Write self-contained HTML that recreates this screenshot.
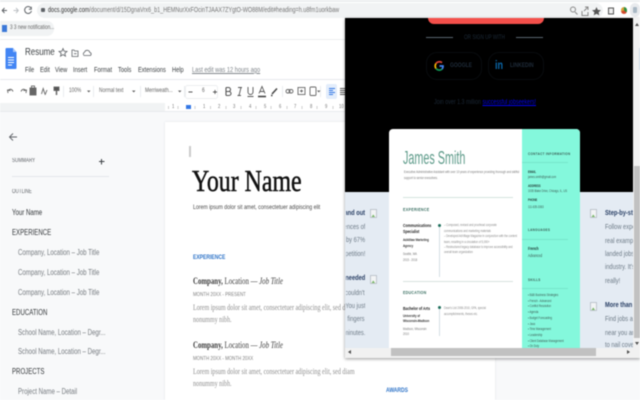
<!DOCTYPE html>
<html><head><meta charset="utf-8"><style>
*{box-sizing:border-box;margin:0;padding:0}
html,body{width:640px;height:400px;overflow:hidden;background:#fff}
body{position:relative;font-family:"Liberation Sans",sans-serif}
#w{position:absolute;left:0;top:0;width:640px;height:400px;overflow:hidden;filter:blur(.4px)}
.a,.t{position:absolute}
.t{white-space:nowrap;line-height:1;transform:scaleX(.76);transform-origin:0 0}
.r{transform-origin:100% 0;right:0}
.s{font-family:"Liberation Serif",serif}
.g{color:#6f7c88;font-size:7.500px}
.b{color:#2b4166;font-size:7.500px;font-weight:bold}
.m{top:66px;font-size:7.500px;color:#3c4043}
.n{top:105px;font-size:5.500px;color:#777}
.o{font-size:8px;color:#33373a;left:12px}
.p{font-size:8px;color:#777c81;left:18px}
.c{left:139px;font-size:3.400px;color:#3c5a52}
.k{left:139px;font-size:3.400px;font-weight:bold;color:#24403a}
.h{left:139px;font-size:4px;font-weight:bold;color:#3a5f55;letter-spacing:.4px}
.x{left:15px;font-size:3.500px;color:#777}
.y{left:55px;font-size:3.400px;color:#888}
.v{left:133px;width:46px;height:1px;background:#76e6cb}
.d{font-size:8px;color:#8e8e8e}
</style></head><body><div id="w">
<!-- browser chrome -->
<div class="a" style="left:0;top:0;width:640px;height:2px;background:#eceef0"></div>
<div class="a" style="left:37px;top:3px;width:566px;height:15px;border-radius:8px;background:#f1f3f4"></div>
<svg class="a" style="left:0;top:0" width="40" height="20" fill="none" stroke="#5f6368" stroke-width="1"><path d="M7 10.500H2.500M4.500 8l-2.300 2.500 2.300 2.500"/><path stroke="#bcc0c4" d="M13.500 10.500H18M16 8l2.300 2.500L16 13"/><path d="M31 8a3.500 3.500 0 1 0 .5 3M31.300 6.800v2.400h-2.400"/></svg>
<div class="a" style="left:41px;top:8px;width:4px;height:4px;background:#5f6368;border-radius:1px"></div>
<div class="t" style="left:48px;top:6px;font-size:7.200px;color:#777"><span style="color:#333">docs.google.com</span>/document/d/15DgnaVrx6_b1_HEMNurXxFOcinTJAAX7ZYgtO-WO88M/edit#heading=h.u8fm1uorkbaw</div>
<svg class="a" style="left:568px;top:4px" width="72" height="14" fill="none" stroke="#888" stroke-width="1"><circle cx="5" cy="5.500" r="2.500"/><path d="M7 8l2.500 2.500M14 7v4.500h6V8M17 3h3v3M20 3l-4 4"/><path fill="#555" stroke="none" d="M28.500 3l1.300 2.900 3.200.3-2.400 2.100.7 3.100-2.800-1.600-2.800 1.600.7-3.100-2.400-2.100 3.200-.3z"/><rect x="40.500" y="4" width="5" height="6" fill="#eee" stroke="#555"/></svg>
<div class="a" style="left:620.500px;top:7px;width:6px;height:7px;border-radius:3px;background:conic-gradient(#2f8f3f 0 35%,#d24a2e 35% 70%,#d8a23a 70% 100%)"></div>
<div class="a" style="left:630px;top:3px;width:10px;height:14px;border-radius:5px;background:#e8eaed"></div>
<div class="a" style="left:633px;top:7px;width:4px;height:6px;border-radius:1px;background:#a9b8c4"></div>
<div class="a" style="left:0;top:21px;width:54px;height:15px;border-radius:0 7px 7px 0;background:#f1f3f4"></div>
<div class="a" style="left:2px;top:25px;width:5px;height:7px;background:#3b78d8"></div>
<div class="t" style="left:10px;top:25px;font-size:6.200px;color:#666">3 3 new notification...</div>
<div class="a" style="left:0;top:39px;width:346px;height:1px;background:#eceef0"></div>
<!-- docs header -->
<svg class="a" style="left:5px;top:47px" width="12" height="24"><path fill="#4285f4" d="M1.500 1h6.500l3.500 4v16a1 1 0 0 1-1 1H1.500a1 1 0 0 1-1-1V2a1 1 0 0 1 1-1z"/><path fill="#a6c5fa" d="M8 1l3.500 4H8z"/><path stroke="#fff" stroke-width="1" d="M3 10.500h6M3 13h6M3 15.500h6M3 18h4"/></svg>
<div class="t" style="left:25px;top:47px;font-size:10.500px;color:#3c4043">Resume</div>
<svg class="a" style="left:58px;top:47px" width="36" height="12" fill="none" stroke="#5f6368" stroke-width=".8"><path d="M5 1.500l1.100 2.700 2.900.2-2.200 1.900.7 2.800L5 7.600 2.500 9.100l.7-2.800L1 4.400l2.900-.2z"/><path d="M14 3h2l.7 1H20v5.500h-6zM16 6.700h2.500"/><path d="M26 8.500h5.500a1.500 1.500 0 0 0 .3-3 2.700 2.700 0 0 0-5.200-.4A2 2 0 0 0 26 8.500z"/></svg>
<div class="t m" style="left:25px">File</div>
<div class="t m" style="left:40px">Edit</div>
<div class="t m" style="left:55px">View</div>
<div class="t m" style="left:73px">Insert</div>
<div class="t m" style="left:94px">Format</div>
<div class="t m" style="left:118px">Tools</div>
<div class="t m" style="left:138px">Extensions</div>
<div class="t m" style="left:172px">Help</div>
<div class="t m" style="left:192px;color:#80868b;text-decoration:underline">Last edit was 12 hours ago</div>
<div class="a" style="left:0;top:79px;width:346px;height:1px;background:#e8eaed"></div>
<!-- toolbar -->
<svg class="a" style="left:0;top:80px" width="346" height="23" fill="none" stroke="#666" stroke-width=".9">
<path d="M8 13l-.5-3 3 .5M8 10.500c2-2 4-1.500 5 1M26 13l.5-3-3 .5M26 10.500c-2-2-4-1.500-5 1"/>
<rect x="30" y="8" width="6" height="7" fill="#666"/><rect x="31.500" y="6" width="3" height="2"/>
<path d="M41.500 14l1.700-5.500 1.700 5.500M47 10l-2 5"/>
<rect x="54" y="7" width="5" height="3.500" fill="#555"/><path d="M56.500 10.500V15" stroke-width="1.500"/>
<path stroke="#e8eaed" d="M63.500 6v11M93.500 6v11M140.500 6v11M184.500 6v11M282.500 6v11M320.500 6v11"/>
<path fill="#666" stroke="none" d="M87 10.500h3.500l-1.750 2zM132 10.500h3.500l-1.750 2zM178 10.500h3.500l-1.750 2zM317 10.500h3.500l-1.750 2z"/>
<rect x="185.500" y="5.500" width="32" height="13" rx="2" stroke="#eceef0"/>
<path stroke="#555" d="M188.500 12h4M215 10v4M213 12h4"/>
<path stroke="#555" stroke-width="1.100" d="M226 7.500v8M226 7.500h2.500a2 2 0 0 1 0 4H226M226 11.500h3a2 2 0 0 1 0 4h-3"/>
<path stroke="#555" d="M238 7.500h4M241 7.500l-2 8M237.500 15.500h3.500"/>
<path stroke="#555" d="M248 7v5a2.500 2.500 0 0 0 5 0V7M247.500 16.500h6"/>
<path stroke="#555" d="M259 13.500l3-7 3 7M260 11.500h4"/><path stroke="#444" stroke-width="1.600" d="M258 16.500h8"/>
<path stroke="#444" stroke-width="1.500" d="M272 14l5-5.500M271 15.500h1.500"/>
<rect x="286" y="9.500" width="4" height="3.500" rx="1.700"/><rect x="289" y="9.500" width="4" height="3.500" rx="1.700"/>
<rect x="298" y="7.500" width="7" height="7"/><path d="M300 11h3M301.500 9.500v3"/>
<rect x="310" y="7" width="6" height="8.500" rx="1"/>
</svg>
<div class="a" style="left:326px;top:84px;width:11px;height:15px;border-radius:2px;background:#e3edfb"></div>
<svg class="a" style="left:328px;top:87px" width="18" height="10" stroke-width="1"><path stroke="#3578e5" d="M1 1.500h6M1 3.500h4M1 5.500h6M1 7.500h4"/><path stroke="#555" d="M12 1.500h6M12 3.500h6M12 5.500h6M12 7.500h6"/></svg>
<div class="t" style="left:69px;top:88px;font-size:6.300px;color:#666">100%</div>
<div class="t" style="left:99px;top:88px;font-size:6.300px;color:#666">Normal text</div>
<div class="t" style="left:145px;top:88px;font-size:6.300px;color:#666">Merriweath...</div>
<div class="t" style="left:202px;top:88px;font-size:6.300px;color:#666">6</div>
<!-- ruler -->
<div class="a" style="left:0;top:103px;width:346px;height:8px;background:#f1f3f4"></div>
<div class="a" style="left:165px;top:103px;width:181px;height:8px;background:#fff"></div>
<div class="t n" style="left:172px">1</div><div class="t n" style="left:203px">1</div><div class="t n" style="left:218px">2</div><div class="t n" style="left:233px">3</div><div class="t n" style="left:249px">4</div><div class="t n" style="left:264px">5</div><div class="t n" style="left:279px">6</div><div class="t n" style="left:294px">7</div><div class="t n" style="left:310px">8</div><div class="t n" style="left:325px">9</div><div class="t n" style="left:339px">10</div>
<svg class="a" style="left:165px;top:105px" width="181" height="5" stroke="#bbb" stroke-width=".7"><path d="M3.500 1v3M13 1v3M30 1v3M45.500 1v3M61 1v3M76 1v3M91 1v3M106 1v3M122 1v3M137 1v3M152 1v3M168 1v3"/></svg>
<div class="a" style="left:186px;top:105px;width:5px;height:4px;background:#3578e5"></div>
<!-- sidebar -->
<div class="a" style="left:0;top:111px;width:640px;height:289px;background:#f8f9fa"></div>
<div class="a" style="left:0;top:111px;width:640px;height:1px;background:#e8eaed"></div>
<svg class="a" style="left:8px;top:132px" width="10" height="10" fill="none" stroke="#5f6368" stroke-width=".9"><path d="M9 5H1.500M5 1.500L1.500 5 5 8.500"/></svg>
<div class="t" style="left:12px;top:158px;font-size:6px;color:#5f6368">SUMMARY</div>
<svg class="a" style="left:98px;top:158px" width="7" height="7" stroke="#3c4043" stroke-width="1"><path d="M3.500 1v5.500M1 3.500h5.500"/></svg>
<div class="a" style="left:12px;top:176px;width:97px;height:1px;background:#e3e6ea"></div>
<div class="t" style="left:12px;top:189px;font-size:6px;color:#5f6368">OUTLINE</div>
<div class="t o" style="top:209px">Your Name</div>
<div class="t o" style="top:229px">EXPERIENCE</div>
<div class="t p" style="top:249px">Company, Location – Job Title</div>
<div class="t p" style="top:269px">Company, Location – Job Title</div>
<div class="t p" style="top:289px">Company, Location – Job Title</div>
<div class="t o" style="top:309px">EDUCATION</div>
<div class="t p" style="top:329px">School Name, Location – Degr...</div>
<div class="t p" style="top:348px">School Name, Location – Degr...</div>
<div class="t o" style="top:368px">PROJECTS</div>
<div class="t p" style="top:388px">Project Name – Detail</div>
<!-- doc page -->
<div class="a" style="left:165px;top:122px;width:330px;height:278px;background:#fff;box-shadow:0 0 2px #dfe1e5"></div>
<div class="a" style="left:189px;top:146px;width:2px;height:11px;background:#ccc"></div>
<div class="t s" style="left:192px;top:165px;font-size:31px;color:#111;-webkit-text-stroke:.5px #111;transform:scaleX(.77)">Your Name</div>
<div class="t" style="left:192.500px;top:205px;font-size:6.800px;color:#4a4a4a">Lorem ipsum dolor sit amet, consectetuer adipiscing elit</div>
<div class="t" style="left:193px;top:255px;font-size:6.600px;font-weight:bold;color:#2f74c8">EXPERIENCE</div>
<div class="t s" style="left:193px;top:277px;font-size:9px;color:#3c3c3c"><b>Company,</b> Location — <i>Job Title</i></div>
<div class="t" style="left:193px;top:292.500px;font-size:5.800px;color:#808080">MONTH 20XX - PRESENT</div>
<div class="t s d" style="left:193px;top:304px">Lorem ipsum dolor sit amet, consectetuer adipiscing elit, sed diam</div>
<div class="t s d" style="left:193px;top:316px">nonummy nibh.</div>
<div class="t s" style="left:193px;top:341px;font-size:9px;color:#3c3c3c"><b>Company,</b> Location — <i>Job Title</i></div>
<div class="t" style="left:193px;top:356.500px;font-size:5.800px;color:#808080">MONTH 20XX - MONTH 20XX</div>
<div class="t s d" style="left:193px;top:368px">Lorem ipsum dolor sit amet, consectetuer adipiscing elit, sed diam</div>
<div class="t s d" style="left:193px;top:380px">nonummy nibh.</div>
<div class="t" style="left:386px;top:388px;font-size:6.600px;font-weight:bold;color:#2f74c8">AWARDS</div>
<!-- popup -->
<div class="a" style="left:345px;top:18px;width:295px;height:340px;background:#e4ebf3;box-shadow:0 1px 3px rgba(0,0,0,.4);overflow:hidden">
  <div class="a" style="left:0;top:0;width:288px;height:174px;background:#000"></div>
  <div class="a" style="left:83px;top:0;width:116px;height:6px;background:#f4504b;border-radius:0 0 7px 7px"></div>
  <div class="a" style="left:81px;top:19px;width:27px;height:1px;background:#5a6670"></div>
  <div class="a" style="left:171px;top:19px;width:27px;height:1px;background:#5a6670"></div>
  <div class="t" style="left:119px;top:17px;font-size:6.200px;color:#1c2a38">OR SIGN UP WITH</div>
  <div class="a" style="left:81px;top:34px;width:56px;height:28px;border:1px solid #090c0f;border-radius:11px"></div>
  <div class="a" style="left:143px;top:34px;width:56px;height:28px;border:1px solid #090c0f;border-radius:11px"></div>
  <svg class="a" style="left:89px;top:42px" width="10" height="12" fill="none" stroke-width="1.700"><path stroke="#db4437" d="M8 2.700A4.200 4.200 0 0 0 2 3.500"/><path stroke="#f4b400" d="M2 3.500a4.500 4.500 0 0 0 0 5"/><path stroke="#0f9d58" d="M2 8.500a4.200 4.200 0 0 0 6 .6"/><path stroke="#4285f4" d="M8 9.100A4 4 0 0 0 9 6H5.500"/></svg>
  <div class="t" style="left:105px;top:44.500px;font-size:6.600px;font-weight:bold;color:#1f2c3a">GOOGLE</div>
  <div class="t" style="left:150px;top:41px;font-size:12px;font-weight:bold;color:#0a66a8">in</div>
  <div class="t" style="left:165px;top:44.500px;font-size:6.600px;font-weight:bold;color:#1f2c3a">LINKEDIN</div>
  <div class="t" style="left:89px;top:81px;font-size:7px;color:#1a2735">Join over 1.3 million <span style="color:#0000ee;text-decoration:underline">successful jobseekers!</span></div>
  <!-- left column snippets -->
  <div class="a" style="left:1px;top:180px;width:19px;height:150px;overflow:hidden">
    <div class="t b r" style="top:11px">and out</div>
    <div class="t g r" style="top:25px">ences of</div>
    <div class="t g r" style="top:38px">by 67%</div>
    <div class="t g r" style="top:52px">petition!</div>
    <div class="t b r" style="top:76px">needed</div>
    <div class="t g r" style="top:91px">couldn't</div>
    <div class="t g r" style="top:104px">You just</div>
    <div class="t g r" style="top:117px">fingers</div>
    <div class="t g r" style="top:131px">minutes.</div>
  </div>
  <svg class="a" style="left:25px;top:191px" width="8" height="10"><rect x=".5" y=".5" width="6" height="8" fill="#f2f4f5" stroke="#b4bcc4" stroke-width=".8"/><path fill="#7ab868" d="M1.500 8l1.800-2.500L5 8z"/></svg>
  <svg class="a" style="left:25px;top:257px" width="8" height="10"><rect x=".5" y=".5" width="6" height="8" fill="#f2f4f5" stroke="#b4bcc4" stroke-width=".8"/><path fill="#7ab868" d="M1.500 8l1.800-2.500L5 8z"/></svg>
  <svg class="a" style="left:245px;top:191px" width="8" height="10"><rect x=".5" y=".5" width="6" height="8" fill="#f2f4f5" stroke="#b4bcc4" stroke-width=".8"/><path fill="#7ab868" d="M1.500 8l1.800-2.500L5 8z"/></svg>
  <svg class="a" style="left:245px;top:284px" width="8" height="10"><rect x=".5" y=".5" width="6" height="8" fill="#f2f4f5" stroke="#b4bcc4" stroke-width=".8"/><path fill="#7ab868" d="M1.500 8l1.800-2.500L5 8z"/></svg>
  <!-- right column snippets -->
  <div class="a" style="left:260px;top:187px;width:29px;height:143px;overflow:hidden">
    <div class="t b" style="left:0;top:4px">Step-by-step</div>
    <div class="t g" style="left:0;top:18px">Follow expert</div>
    <div class="t g" style="left:0;top:32px">real examples</div>
    <div class="t g" style="left:0;top:45px">landed jobs in</div>
    <div class="t g" style="left:0;top:58px">industry. It's</div>
    <div class="t g" style="left:0;top:72px">really!</div>
    <div class="t b" style="left:0;top:96px">More than</div>
    <div class="t g" style="left:0;top:110px">Find jobs and</div>
    <div class="t g" style="left:0;top:124px">near you and</div>
    <div class="t g" style="left:0;top:136px">to nail cover</div>
  </div>
  <!-- resume card -->
  <div class="a" style="left:44px;top:111px;width:191px;height:219px;background:#fff;border-radius:4px 4px 0 0;overflow:hidden">
    <div class="a" style="left:133px;top:0;width:58px;height:219px;background:#84f8dc"></div>
    <div class="t" style="left:14px;top:20px;font-size:18px;color:#5f9c8b;transform:scaleX(.6)">James Smith</div>
    <div class="t x" style="top:42px">Executive Administrative Assistant with over 10 years of experience providing thorough and skillful</div>
    <div class="t x" style="top:48px">support to senior executives.</div>
    <div class="a" style="left:14px;top:68px;width:110px;height:1px;background:#d4e3df"></div>
    <div class="t" style="left:14px;top:80px;font-size:4.800px;font-weight:bold;color:#3a6f62;letter-spacing:.4px">EXPERIENCE</div>
    <div class="t" style="left:14px;top:95px;font-size:4.600px;font-weight:bold;color:#222">Communications</div>
    <div class="t" style="left:14px;top:101px;font-size:4.600px;font-weight:bold;color:#222">Specialist</div>
    <div class="t" style="left:14px;top:110px;font-size:3.700px;font-weight:bold;color:#333">AdAlllaw Marketing</div>
    <div class="t" style="left:14px;top:116px;font-size:3.700px;font-weight:bold;color:#333">Agency</div>
    <div class="t x" style="left:14px;top:124px">Seattle, WA</div>
    <div class="t x" style="left:14px;top:129.500px">2015 - 2018</div>
    <div class="a" style="left:48.500px;top:95px;width:3px;height:3px;border-radius:50%;background:#1f6f5c"></div>
    <div class="a" style="left:49.500px;top:98px;width:1px;height:50px;background:#d5dfe3"></div>
    <div class="t y" style="top:95px">– Composed, revised and proofread corporate</div>
    <div class="t y" style="top:100.500px">communications and marketing materials</div>
    <div class="t y" style="top:106px">– Developed AdVillage Magazine in conjunction with the content</div>
    <div class="t y" style="top:111.500px">team, resulting in a circulation of 5,000+</div>
    <div class="t y" style="top:117px">– Restructured legacy database to improve accessibility and</div>
    <div class="t y" style="top:122px">overall team organization</div>
    <div class="a" style="left:14px;top:152px;width:110px;height:1px;background:#d8e2df"></div>
    <div class="t" style="left:14px;top:163px;font-size:4.800px;font-weight:bold;color:#3a6f62;letter-spacing:.3px">EDUCATION</div>
    <div class="t" style="left:14px;top:178px;font-size:4.600px;font-weight:bold;color:#222">Bachelor of Arts</div>
    <div class="t" style="left:14px;top:186px;font-size:3.700px;font-weight:bold;color:#333">University of</div>
    <div class="t" style="left:14px;top:191px;font-size:3.700px;font-weight:bold;color:#333">Wisconsin-Madison</div>
    <div class="t x" style="left:14px;top:199px">Madison, Wisconsin</div>
    <div class="t x" style="left:14px;top:204px">2010</div>
    <div class="a" style="left:48.500px;top:177px;width:3px;height:3px;border-radius:50%;background:#1f6f5c"></div>
    <div class="a" style="left:49.500px;top:180px;width:1px;height:27px;background:#d5dfe3"></div>
    <div class="t y" style="top:178px">Dean's List 2008-2010, GPA, special</div>
    <div class="t y" style="top:184px">accomplishments, theses etc.</div>
    <div class="t h" style="top:23px">CONTACT INFORMATION</div>
    <div class="a v" style="top:33px"></div>
    <div class="t k" style="top:42px">EMAIL</div>
    <div class="t c" style="top:47px">james.smith@gmail.com</div>
    <div class="t k" style="top:56px">ADDRESS</div>
    <div class="t c" style="top:61px">1035 Blake Drive, Chicago, IL, US</div>
    <div class="t k" style="top:70px">PHONE</div>
    <div class="t c" style="top:77px">111-635-3363</div>
    <div class="t h" style="top:99px">LANGUAGES</div>
    <div class="a v" style="top:110px"></div>
    <div class="t k" style="top:118px;font-size:4.200px">French</div>
    <div class="t c" style="top:125px;font-size:4.200px">Advanced</div>
    <div class="t h" style="top:149px">SKILLS</div>
    <div class="a v" style="top:159px"></div>
    <div class="t c" style="top:165px">• B&amp;B Business Strategies</div>
    <div class="t c" style="top:170.500px">• French - Advanced</div>
    <div class="t c" style="top:176px">• Conflict Resolution</div>
    <div class="t c" style="top:182px">• Agenda</div>
    <div class="t c" style="top:188px">• Budget Forecasting</div>
    <div class="t c" style="top:194px">• Java</div>
    <div class="t c" style="top:199px">• Time Management</div>
    <div class="t c" style="top:205px">• Leadership</div>
    <div class="t c" style="top:211px">• Client Database Management</div>
    <div class="t c" style="top:216px">• On Duty</div>
  </div>
  <!-- horizontal scrollbar -->
  <div class="a" style="left:0;top:330px;width:289px;height:10px;background:#f1f1f1"></div>
  <div class="a" style="left:46px;top:330px;width:205px;height:8px;background:#c1c1c1"></div>
  <div class="a" style="left:3px;top:332px;border-right:3px solid #505050;border-top:2px solid transparent;border-bottom:2px solid transparent"></div>
  <div class="a" style="left:282px;top:332px;border-left:3px solid #505050;border-top:2px solid transparent;border-bottom:2px solid transparent"></div>
  <!-- vertical scrollbar -->
  <div class="a" style="left:288px;top:0;width:7px;height:340px;background:#f1f1f1"></div>
  <div class="a" style="left:294px;top:30px;width:1px;height:22px;background:#c9d8e6"></div>
  <div class="a" style="left:289px;top:148px;width:6px;height:172px;background:#c1c1c1"></div>
  <div class="a" style="left:290px;top:5px;border-bottom:3px solid #505050;border-left:2px solid transparent;border-right:2px solid transparent"></div>
  <div class="a" style="left:290px;top:324px;border-top:3px solid #505050;border-left:2px solid transparent;border-right:2px solid transparent"></div>
</div>
</div></body></html>
